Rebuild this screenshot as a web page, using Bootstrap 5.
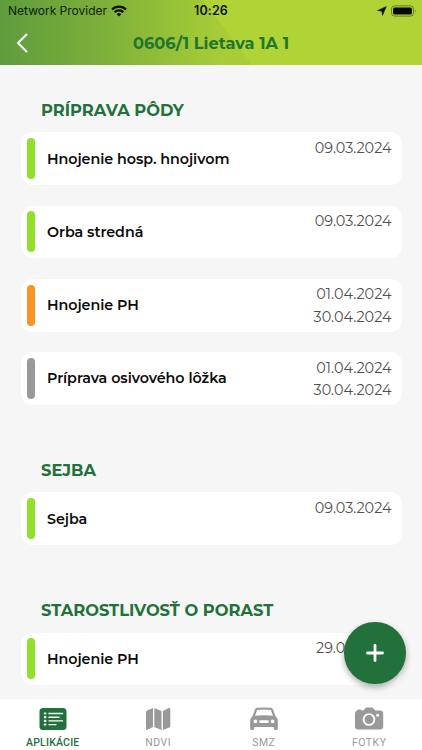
<!DOCTYPE html>
<html lang="sk">
<head>
<meta charset="utf-8">
<meta name="viewport" content="width=device-width, initial-scale=1">
<title>0606/1 Lietava 1A 1</title>
<link href="https://cdn.jsdelivr.net/npm/bootstrap@5.3.0/dist/css/bootstrap.min.css" rel="stylesheet">
<style>
body{font-family:Montserrat,Inter,"Open Sans",sans-serif;background:#f6f6f6;color:#0b0b0b;height:750px}
.hdr{height:65.25px;background:linear-gradient(90deg,#5f9c3c 0,#7aad3a 22%,#95c138 40%,#a6cc37 52%,#acd136 70%);position:relative}
.hdr-shape{position:absolute;inset:0;background:#b0d435;clip-path:polygon(202px 0,100% 0,100% 100%,252px 100%,232px 38px)}
.status{height:22px;font-family:Inter,sans-serif;font-size:12px;line-height:22px;color:#10200c;position:relative}
.clock{font-weight:600;font-size:12.5px;color:#111;letter-spacing:.1px}
.titlebar{height:43.25px;position:relative}
.titlebar h1{font-size:16.2px;font-weight:700;color:#22752f;line-height:43px;letter-spacing:.03px}
.feed{height:634px}
.sect-title{height:67px;padding:33.5px 0 0 41px;font-size:16.3px;line-height:22px;font-weight:700;color:#22713b;letter-spacing:0}
.task{height:52.75px;margin:0 20.5px 20.5px 21px;border-radius:12px;padding:5.5px 10px 5.5px 6px}
.stripe{width:8px;height:41px;border-radius:4px;background:#92df2c}
.stripe.planned{background:#f99526}
.stripe.idle{background:#999}
.task-name{font-size:14.3px;font-weight:600;margin-left:12px;padding-top:1.6px;letter-spacing:-.04px;color:#0b0b0b}
.dates{font-size:14.4px;line-height:22.8px;font-weight:400;color:#505050;margin-top:-.9px}
.fab{position:absolute;left:344px;top:622px;width:61.5px;height:61.5px;background:#22713b;border-radius:50%;box-shadow:0 3px 6px rgba(0,0,0,.32)}
.tabs{height:51px;font-family:Roboto,sans-serif;font-size:10.5px;color:#999;letter-spacing:.5px}
.tabs a{color:#999;text-decoration:none;padding-top:7.2px;line-height:12px}
.tabs a.current{color:#22713b;font-weight:500;letter-spacing:.2px}
.tabs svg{height:26px;width:32px;margin-bottom:4.8px}
</style>
</head>
<body class="d-flex flex-column overflow-hidden position-relative">
<header class="hdr flex-shrink-0">
  <div class="hdr-shape"></div>
  <div class="status d-flex align-items-center ps-2">
    <span>Network Provider</span>
    <svg class="ms-1" width="16" height="12" viewBox="0 0 16 12"><g fill="none" stroke="#111" stroke-width="2.2"><path d="M1 4.5a10 10 0 0 1 14 0"/><path d="M3.6 7.2a6.2 6.2 0 0 1 8.8 0"/></g><path d="M5.7 9.2a3.3 3.3 0 0 1 4.6 0L8 11.6z" fill="#111"/></svg>
    <span class="clock position-absolute start-50 translate-middle-x">10:26</span>
    <svg class="ms-auto" width="10" height="10" viewBox="0 0 10 10"><path d="M9.3.5 5.5 9.400 4.900 5.200.6 4.500z" fill="#111" stroke="#111" stroke-width=".5" stroke-linejoin="round"/></svg>
    <svg class="ms-1 me-1" width="27" height="12" viewBox="0 0 27 12"><rect x=".5" y=".9" width="22" height="10.200" rx="3" fill="none" stroke="#65792a"/><rect x="2.100" y="2.400" width="18.800" height="7.200" rx="1.600" fill="#080808"/><path d="M24 4.300q1.500 1.700 0 3.400z" fill="#65792a"/></svg>
  </div>
  <div class="titlebar">
    <svg class="position-absolute top-0 start-0" width="40" height="43" viewBox="0 0 40 43"><path d="M26.500 12.500 18 21l8.500 8.500" fill="none" stroke="#fff" stroke-width="2" stroke-linecap="round" stroke-linejoin="round"/></svg>
    <h1 class="text-center m-0">0606/1 Lietava 1A 1</h1>
  </div>
</header>
<main class="feed flex-shrink-0 overflow-hidden">
  <section>
    <h2 class="sect-title m-0">PRÍPRAVA PÔDY</h2>
    <div class="task bg-white d-flex align-items-center"><span class="stripe"></span><span class="task-name">Hnojenie hosp. hnojivom</span><div class="dates ms-auto align-self-start text-end">09.03.2024</div></div>
    <div class="task bg-white d-flex align-items-center"><span class="stripe"></span><span class="task-name">Orba stredná</span><div class="dates ms-auto align-self-start text-end">09.03.2024</div></div>
    <div class="task bg-white d-flex align-items-center"><span class="stripe planned"></span><span class="task-name">Hnojenie PH</span><div class="dates ms-auto align-self-start text-end">01.04.2024<br>30.04.2024</div></div>
    <div class="task bg-white d-flex align-items-center"><span class="stripe idle"></span><span class="task-name">Príprava osivového lôžka</span><div class="dates ms-auto align-self-start text-end">01.04.2024<br>30.04.2024</div></div>
  </section>
  <section>
    <h2 class="sect-title m-0">SEJBA</h2>
    <div class="task bg-white d-flex align-items-center"><span class="stripe"></span><span class="task-name">Sejba</span><div class="dates ms-auto align-self-start text-end">09.03.2024</div></div>
  </section>
  <section>
    <h2 class="sect-title m-0">STAROSTLIVOSŤ O PORAST</h2>
    <div class="task bg-white d-flex align-items-center"><span class="stripe"></span><span class="task-name">Hnojenie PH</span><div class="dates ms-auto align-self-start text-end">29.03.2024</div></div>
  </section>
</main>
<button class="fab btn p-0 border-0 d-flex align-items-center justify-content-center" aria-label="Pridať"><svg width="18" height="18" viewBox="0 0 18 18"><path d="M9 1.500v15M1.500 9h15" stroke="#fff" stroke-width="2.800" stroke-linecap="round"/></svg></button>
<nav class="tabs bg-white d-flex flex-shrink-0 text-center">
  <a href="#" class="current d-flex flex-column align-items-center flex-fill w-25"><svg viewBox="0 0 32 26"><rect x="2.500" y="2" width="27" height="22" rx="3.500" fill="#22713b"/><g stroke="#fff" stroke-width="1.400" stroke-linecap="round"><path d="M12 7.500h13.500M12 11.200h10M12 14.900h13.500M12 18.600h7"/><path d="M7.800 7.500h.6M7.800 11.200h.6M7.800 14.900h.6M7.800 18.600h.6" stroke-width="2.200"/></g></svg><span>APLIKÁCIE</span></a>
  <a href="#" class="d-flex flex-column align-items-center flex-fill w-25"><svg viewBox="0 0 32 26"><path d="M4 6q0-1 1-1.500L11 2v19l-5.500 2.800Q4 24.300 4 23zM12.300 2l7.200 3v19l-7.200-3zM20.900 5l6-2.900Q28.300 1.600 28.300 3v17q0 1-1 1.500L20.900 24z" fill="#999"/></svg><span>NDVI</span></a>
  <a href="#" class="d-flex flex-column align-items-center flex-fill w-25"><svg viewBox="0 0 32 26"><path fill="#999" fill-rule="evenodd" d="M9.500 1.800Q16 1.200 22.500 1.800q2 .2 2.700 2l2.300 6.500q2.300 1.700 2.300 4.200v8q0 1.500-1.400 1.500h-1.200q-1.400 0-1.400-1.500V21H6.200v1.500Q6.200 24 4.800 24H3.600q-1.400 0-1.400-1.500v-8q0-2.500 2.300-4.200l2.300-6.500q.7-1.800 2.700-2zM9.200 4 7 9.800q9-.9 18 0L22.800 4Q16 3 9.200 4zM7.400 13.400a1.900 1.900 0 1 0 0 3.800 1.900 1.900 0 0 0 0-3.800zm17.200 0a1.900 1.900 0 1 0 0 3.800 1.900 1.900 0 0 0 0-3.800zM12.500 14.200a1.400 1.400 0 0 0 0 2.800h7a1.400 1.400 0 0 0 0-2.800z"/></svg><span>SMZ</span></a>
  <a href="#" class="d-flex flex-column align-items-center flex-fill w-25"><svg viewBox="0 0 32 26"><path d="M10.300 4.400 12 2.400q.8-.9 2-.9h4.500q1.200 0 2 .9l1.700 2h5q3 0 3 3v13q0 3-3 3H5q-3 0-3-3v-13q0-2.300 2-2.700 0-1.300 1.300-1.300h2Q8.600 3.400 8.600 4.400z" fill="#999"/><circle cx="16" cy="13.500" r="5.400" fill="none" stroke="#fff" stroke-width="1.900"/><circle cx="24.600" cy="9.200" r="1.500" fill="#fff"/></svg><span>FOTKY</span></a>
</nav>
<script src="https://cdn.jsdelivr.net/npm/bootstrap@5.3.0/dist/js/bootstrap.bundle.min.js"></script>
</body>
</html>
